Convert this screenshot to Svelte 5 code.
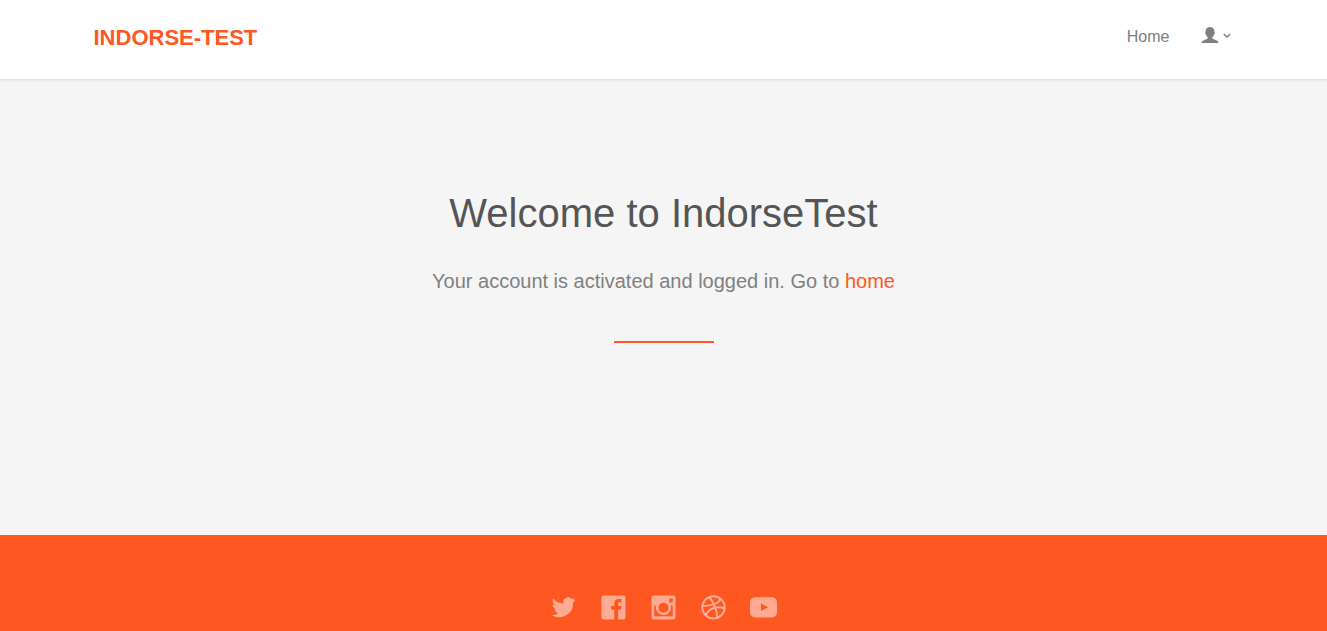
<script>
  const links = ['Twitter', 'Facebook', 'Instagram', 'Dribbble', 'YouTube'];
</script>

<header>
  <div class="container bar">
    <a class="brand" href="#top">INDORSE-TEST</a>
    <nav>
      <a href="#home">Home</a>
      <button type="button" aria-label="Account" aria-haspopup="true">
        <svg width="18" height="18" viewBox="0 0 18 18"><path d="M9 0C6.300 0 4.600 1.700 4.600 4.400c0 .5-.4.700-.4 1.300 0 .9.400 1.500.8 1.800.3 1.300.9 2.200 1.700 2.900v1.200L2.300 13.400C1.200 13.900.6 14.700.6 16h16.800c0-1.300-.6-2.100-1.700-2.600l-4.400-1.800v-1.200c.8-.7 1.400-1.600 1.700-2.900.4-.3.800-.9.800-1.800 0-.6-.4-.8-.4-1.300C13.400 1.700 11.700 0 9 0z" fill="currentColor"/></svg>
        <svg width="8" height="6" viewBox="0 0 8 6"><path d="M.8 1l3.200 3 3.200-3" fill="none" stroke="currentColor" stroke-width="1.500"/></svg>
      </button>
    </nav>
  </div>
</header>

<main>
  <h1>Welcome to IndorseTest</h1>
  <p>Your account is activated and logged in. Go to <a href="#home">home</a></p>
  <hr />
</main>

<footer>
  {#each links as name}
    <a href="#{name.toLowerCase()}" aria-label={name}>
      <svg width="28" height="28" viewBox="0.5 0 28 28" fill="currentColor" fill-rule="evenodd">
        {#if name === 'Twitter'}
          <path d="M26 6.800c-.9.400-1.800.7-2.800.8 1-.6 1.800-1.600 2.200-2.700-1 .6-2 1-3.100 1.200a4.900 4.900 0 0 0-8.400 4.500C9.800 10.400 6.200 8.400 3.800 5.500a4.900 4.900 0 0 0 1.500 6.600c-.8 0-1.600-.3-2.200-.6 0 2.400 1.700 4.400 3.900 4.900-.7.200-1.500.2-2.200.1.600 2 2.400 3.400 4.600 3.400A9.900 9.900 0 0 1 2 21.900 14 14 0 0 0 23.600 9.400c.9-.7 1.800-1.600 2.400-2.600z"/>
        {:else if name === 'Facebook'}
          <path d="M4 2.500h20a2 2 0 0 1 2 2v19.900a2 2 0 0 1-2 2h-5.400V16.500h3l.4-3.500h-3.400v-2c0-1.200.5-1.700 1.700-1.700H22V6h-2.700c-3.200 0-4.600 1.700-4.600 4.600V13h-3v3.500h3v9.900H4a2 2 0 0 1-2-2V4.500a2 2 0 0 1 2-2z"/>
        {:else if name === 'Instagram'}
          <path d="M4 2.500h20a2 2 0 0 1 2 2v19.900a2 2 0 0 1-2 2H4a2 2 0 0 1-2-2V4.500a2 2 0 0 1 2-2zm15.700 3v4h3.500v-4zM4.800 12.500v10.700h18.400V12.500h-2a7.500 7.500 0 1 1-14.400 0zm9.200-2.700a5 5 0 1 0 0 10 5 5 0 0 0 0-10z"/>
        {:else if name === 'Dribbble'}
          <g fill="none" stroke="currentColor" stroke-width="2"><circle cx="14" cy="14.400" r="11.200"/><path d="M10 4.300c4 5 7 11 8 20.400M3 13c8 0 14-1 18.200-6.500M6 22c4.500-7.500 11-9 19-6.800"/></g>
        {:else}
          <path d="M5.500 4.200h17a5 5 0 0 1 5 5v10.200a5 5 0 0 1-5 5h-17a5 5 0 0 1-5-5V9.200a5 5 0 0 1 5-5zm6 6.300V18l7-3.700z"/>
        {/if}
      </svg>
    </a>
  {/each}
</footer>

<style>
  :global(body) { margin: 0; background: #f5f5f5; color: #808080; font: 16px/24px "Liberation Sans", Arial, sans-serif; }
  a { color: #ff5722; text-decoration: none; }
  header { background: #fff; box-shadow: 0 0 4px rgba(0, 0, 0, 0.2); }
  .container { max-width: 1140px; margin: 0 auto; }
  .bar { display: flex; align-items: center; justify-content: space-between; padding: 24px 0 27px; }
  .brand { font-size: 22px; line-height: 28px; font-weight: 700; }
  nav { display: flex; align-items: flex-start; gap: 31px; padding-right: 3px; }
  nav a { color: #808080; }
  button { display: flex; align-items: center; gap: 4px; padding: 3px 0 0; border: 0; background: none; color: #808080; }
  nav { height: 28px; line-height: 26px; }
  main { text-align: center; padding: 110px 16px 192px; }
  h1 { margin: 0 0 32px; font-size: 40px; line-height: 48px; font-weight: 400; color: #555; }
  p { margin: 0; font-size: 20px; line-height: 24px; }
  hr { width: 100px; height: 2px; border: 0; margin: 48px auto 0; background: #ff5722; }
  footer { display: flex; justify-content: center; gap: 22px; padding: 58px 16px 10px; background: #ff5722; }
  footer a { display: flex; color: rgba(255, 255, 255, 0.5); }
</style>
